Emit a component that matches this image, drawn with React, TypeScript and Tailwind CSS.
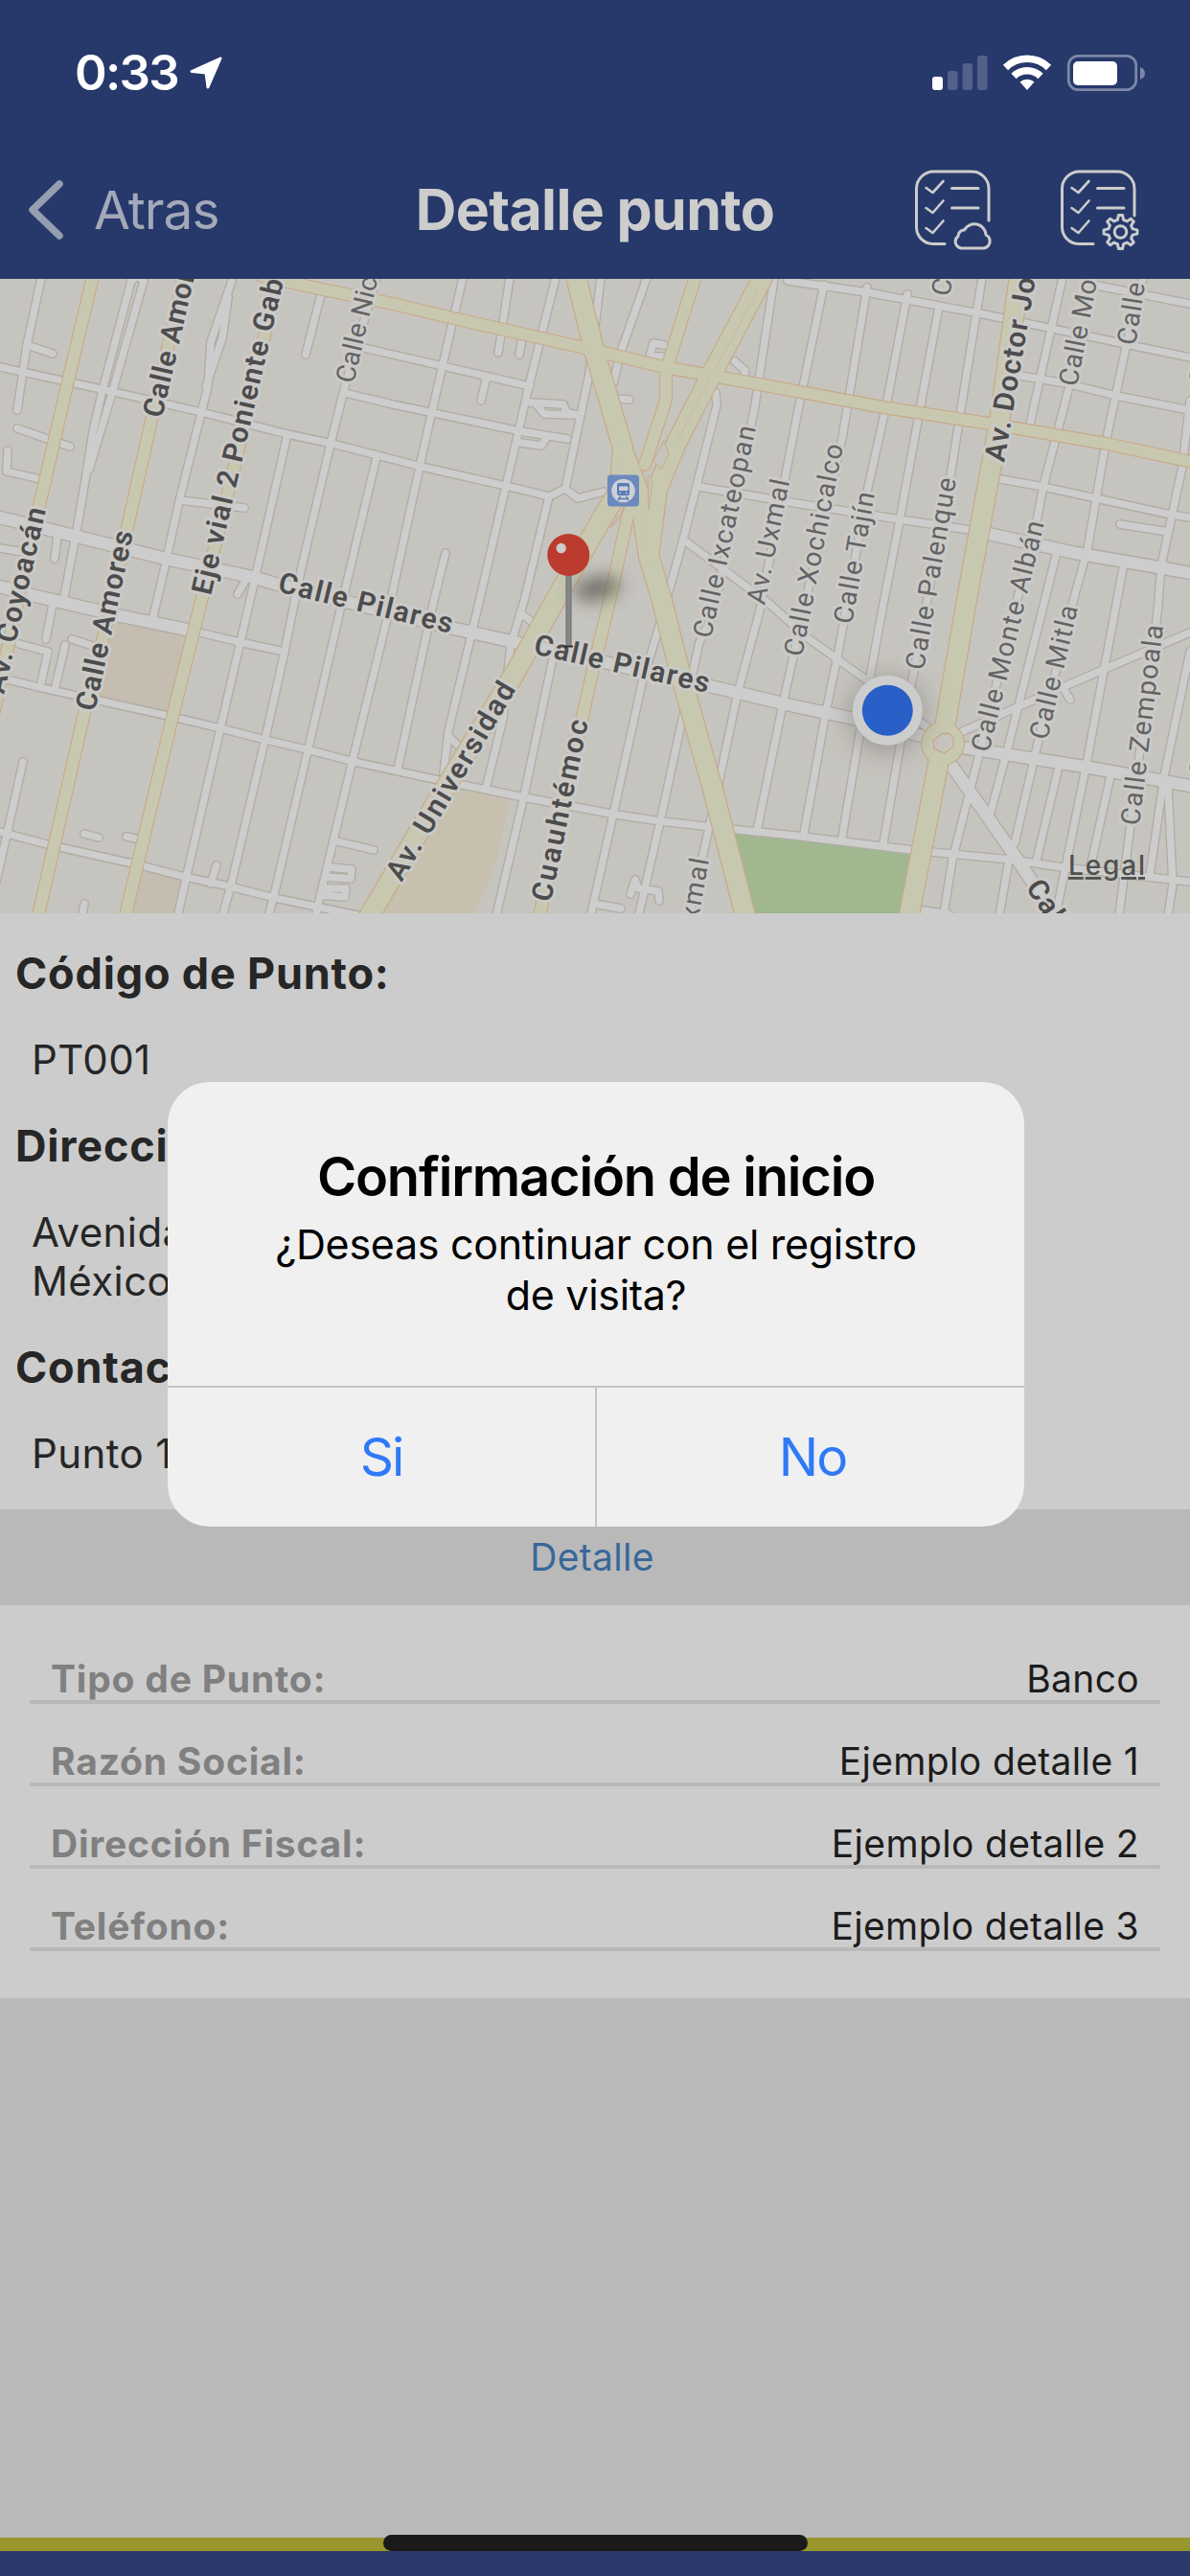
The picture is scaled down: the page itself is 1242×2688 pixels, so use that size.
import type { ReactNode } from "react";

type Point = [number, number];

type StreetLabel = {
    text: string;
    from: Point;
    to: Point;
    bold?: boolean;
};

const minorRoads = [
    "43,290 28,360 18,428",
    "28,360 55,369",
    "0,383 110,407 210,430 300,453 347,463 440,487 528,507 573,518 590,510 603,520 630,513",
    "18,447 73,466",
    "8,470 7,492 42,500",
    "137,293 107,407 97,450 88,507 80,553 67,623",
    "150,293 117,410 93,490",
    "137,293 144,288 150,293",
    "242,293 220,357 217,403 187,523 173,587 160,643",
    "238,310 232,353 215,403",
    "188,522 255,530",
    "335,307 319,370",
    "380,363 410,370 553,403",
    "360,410 410,422 543,450 592,458",
    "393,290 360,403 345,463 313,600 297,680 277,770 242,920 233,953",
    "300,453 267,600 230,760 195,913 186,953",
    "393,477 355,637 322,780 287,930 281,953",
    "60,560 57,583",
    "0,572 30,577",
    "255,608 248,620",
    "55,630 48,667",
    "20,672 50,680 42,717",
    "68,673 57,720",
    "75,667 100,675",
    "200,658 250,670 297,680",
    "0,707 40,717 180,748 230,760 277,772 320,782 370,795 453,813 547,832 643,850 690,857 743,863 830,872 952,887 1055,897 1109,905 1242,920",
    "24,795 8,867 -4,920",
    "0,868 53,882 147,903 193,915 240,925 287,937 373,955",
    "88,870 103,874",
    "132,873 146,876",
    "88,943 86,955",
    "226,903 220,922",
    "403,650 368,793 348,877 333,940 330,953",
    "348,877 390,887",
    "343,905 367,907 366,917 339,915",
    "337,927 361,927 360,936 334,934",
    "465,577 452,630 415,803",
    "483,290 450,433 438,487 412,607 403,650",
    "532,290 520,368",
    "580,290 565,350 552,403 528,507 502,620 468,763 463,807",
    "545,353 542,370",
    "507,397 502,418",
    "627,290 615,390 590,510",
    "675,290 647,370 640,400",
    "643,416 657,417",
    "553,420 588,422 591,430 603,433",
    "560,422 568,432 603,433",
    "543,462 565,465 570,457",
    "573,518 547,627 533,673 525,750 507,823",
    "808,290 788,423 745,640 730,670 710,760 690,853 667,953",
    "747,410 748,423 727,507 713,563 687,657 670,713 640,850 617,953",
    "730,508 830,525 939,542 1012,553",
    "713,563 803,630 842,665 905,710 969,760",
    "693,360 682,358 678,372 693,372",
    "767,377 778,387 775,397",
    "860,297 832,433 793,637 770,723 743,850 720,953",
    "905,300 879,457 818,730 790,867",
    "947,307 925,423 905,513 875,680 862,743 839,870",
    "980,320 959,433 939,543 922,630 897,767 879,873",
    "1025,290 1002,433 992,497 952,710 939,780 922,880",
    "822,293 905,305 1022,327 1099,343 1189,362 1242,373",
    "1109,290 1085,397 1075,443",
    "1065,392 1112,400 1165,413 1242,428",
    "1115,407 1089,507 1082,543 1022,787 994,897 985,953",
    "1193,290 1175,363 1155,457 1135,573 1122,620 1082,780 1059,880",
    "1102,580 1092,620 1052,780 1032,855",
    "1172,593 1167,620 1134,797 1109,920 1102,955",
    "1242,418 1234,487 1212,590 1208,640 1180,860 1168,955",
    "1242,680 1215,810 1200,913",
    "1219,820 1224,923 1219,955",
    "1105,800 1082,897",
    "1159,810 1138,905",
    "1052,903 1043,955",
    "1044,500 1089,508 1222,537 1242,540",
    "1169,547 1219,555",
    "1145,298 1242,317",
    "1005,763 1109,717 1242,660",
    "1109,717 1117,730",
    "963,950 990,954",
    "543,640 557,650",
    "470,770 480,780",
    "577,687 547,830 518,955",
    "620,943 648,948",
    "658,933 663,918 666,927 687,930 688,940",
];

const mediumRoads = [
    "0,540 77,559 173,583 267,603 290,610 470,655 537,670 737,715 830,737 892,750 962,768",
    "1005,780 1132,800 1242,820",
    "0,612 33,621 127,643 200,658",
    "1032,557 1122,577 1215,593 1242,598",
    "992,797 1062,897 1099,953",
];

const avenues = [
    "97,288 70,402 40,532 5,690 -10,760",
    "192,288 157,443 133,550 107,668 87,748 40,955",
    "290,288 247,477 210,627 180,748 144,900 131,955",
    "273,288 337,302 410,317 473,332 610,363 693,383 743,392 830,408 922,425 1032,442 1155,463 1244,482",
    "726,288 695,387 695,417 673,485",
    "657,530 637,623 618,703 608,747 565,947 563,955",
];

const boulevards = [
    "601,288 620,365 650,467 647,510 626,545 583,620 537,703 443,858 383,960",
    "650,470 668,517 677,580 690,623 710,703 743,820 779,960",
    "797,288 743,390 706,462 686,510 677,580",
    "1064,288 1043,440 1010,620 987,753 980,793 962,887 948,960",
];

const streetLabels: StreetLabel[] = [
    { text: "Calle Amores", from: [169, 437], to: [211, 254], bold: true },
    { text: "Calle Amores", from: [99, 743], to: [139, 556], bold: true },
    { text: "Av. Coyoacán", from: [4, 725], to: [48, 532], bold: true },
    { text: "Eje vial 2 Poniente Gab", from: [220, 622], to: [296, 293], bold: true },
    { text: "Calle Nico", from: [369, 401], to: [398, 275] },
    { text: "Calle Pilares", from: [289, 617], to: [470, 661], bold: true },
    { text: "Calle Pilares", from: [556, 682], to: [738, 723], bold: true },
    { text: "Av. Universidad", from: [419, 921], to: [539, 719], bold: true },
    { text: "Av. Cuauhtémoc", from: [563, 999], to: [614, 753], bold: true },
    { text: "Av. Uxmal", from: [716, 1030], to: [740, 897] },
    { text: "Av. Uxmal", from: [798, 632], to: [824, 502] },
    { text: "Calle Ixcateopan", from: [742, 667], to: [789, 446] },
    { text: "Calle Xochicalco", from: [837, 686], to: [880, 465] },
    { text: "Calle Tajín", from: [889, 652], to: [913, 515] },
    { text: "Calle Palenque", from: [964, 700], to: [998, 500] },
    { text: "Calle Monte Albán", from: [1032, 786], to: [1090, 546] },
    { text: "Calle Mitla", from: [1093, 773], to: [1125, 634] },
    { text: "Calle Zempoala", from: [1189, 862], to: [1214, 653] },
    { text: "Av. Doctor Jo", from: [1048, 483], to: [1081, 291], bold: true },
    { text: "Calle Mo", from: [1124, 404], to: [1145, 293] },
    { text: "Calle", from: [1185, 361], to: [1195, 296] },
    { text: "Ca", from: [991, 310], to: [997, 276] },
    { text: "Calle", from: [1260, 403], to: [1270, 338] },
    { text: "Calle", from: [1260, 812], to: [1270, 747] },
    { text: "Calle", from: [1070, 926], to: [1110, 986], bold: true },
];

const pointInfo = [
    { label: "Código de Punto:", lines: ["PT001"] },
    { label: "Dirección:", lines: ["Avenida", "México"] },
    { label: "Contacto:", lines: ["Punto 1"] },
];

const details = [
    { label: "Tipo de Punto:", value: "Banco" },
    { label: "Razón Social:", value: "Ejemplo detalle 1" },
    { label: "Dirección Fiscal:", value: "Ejemplo detalle 2" },
    { label: "Teléfono:", value: "Ejemplo detalle 3" },
];

// Casings go under every fill so that crossings stay open
function Roads({ paths, width, color }: { paths: string[]; width: number; color: string }) {
    return (
        <g fill="none" stroke={color} strokeWidth={width} strokeLinecap="round" strokeLinejoin="round">
            {paths.map((points) => (
                <polyline key={points} points={points} />
            ))}
        </g>
    );
}

function MapLabel({ text, from, to, bold }: StreetLabel) {
    const dx = to[0] - from[0];
    const dy = to[1] - from[1];
    const angle = (Math.atan2(dy, dx) * 180) / Math.PI;

    return (
        <text
            transform={`translate(${from[0]} ${from[1]}) rotate(${angle})`}
            textLength={Math.hypot(dx, dy)}
            fontSize={bold ? 30 : 28}
            fontWeight={bold ? 600 : 400}
            fill={bold ? "#4c4c4c" : "#636363"}
            stroke="#cbcac8"
            strokeWidth={6}
            strokeLinejoin="round"
            paintOrder="stroke"
        >
            {text}
        </text>
    );
}

function StreetMap() {
    return (
        <svg viewBox="0 291 1242 662" className="block w-full h-[662px] shrink-0 bg-[#c6c4be] font-[Roboto,sans-serif]">
            <defs>
                <filter id="soft" x="-100%" y="-100%" width="300%" height="300%">
                    <feGaussianBlur stdDeviation="9" />
                </filter>
                <filter id="halo" x="-100%" y="-100%" width="300%" height="300%">
                    <feGaussianBlur stdDeviation="14" />
                </filter>
            </defs>

            {/* Blocks and park */}
            <path d="M118 645 L200 660 L178 748 L98 730Z" fill="#c4bdb0" />
            <path d="M147 905 L189 916 L181 953 L134 953Z" fill="#c4bdb0" />
            <path d="M462 820 L532 833 L518 900 L495 953 L392 953Z" fill="#c7c0ae" />
            <path d="M765 866 L955 887 L940 953 L785 953Z" fill="#a1b790" />

            <Roads paths={minorRoads} width={10} color="#b1aba3" />
            <Roads paths={mediumRoads} width={15} color="#b1aba3" />
            <Roads paths={minorRoads} width={7.4} color="#cdcdcd" />
            <Roads paths={mediumRoads} width={12.4} color="#cdcdcd" />
            <Roads paths={avenues} width={14} color="#c8a987" />
            <Roads paths={boulevards} width={22.4} color="#c8a987" />
            <circle cx="984" cy="776" r="23" fill="#c8a987" />
            <Roads paths={avenues} width={11.8} color="#c8c8b1" />
            <Roads paths={boulevards} width={20} color="#c8c8b1" />
            <circle cx="984" cy="776" r="21.8" fill="#c8c8b1" />
            <path d="M974 773 L983 765.500 L990 765 L995 770 L995 779 L985 786 L975 781Z" fill="#c6c4be" stroke="#c8a987" strokeWidth="1.300" />
            <path d="M676 496 L681 501 L677 532Z M693 460 L698 474 L690 490 L682 481Z M636 551 L649 535 L652 529 L648 540Z" fill="#c6c4be" stroke="#c8a987" strokeWidth="1" />
            <path d="M706 462 L740 397 M746 387 L790 305" stroke="#c6b9a0" strokeWidth="1" />

            <ellipse cx="623" cy="614" rx="25" ry="12" transform="rotate(-12 623 614)" fill="#55554d" opacity="0.75" filter="url(#soft)" />

            {streetLabels.map((label) => (
                <MapLabel key={`${label.text}-${label.from.join("-")}`} {...label} />
            ))}

            {/* Metro station */}
            <rect x="634" y="495.500" width="33" height="33" rx="3.500" fill="#6b89be" />
            <circle cx="650.500" cy="512" r="12.300" fill="#cdd0d4" />
            <path d="M646 504h9q2 0 2 2v9q0 2-2 2h-9q-2 0-2-2v-9q0-2 2-2Z" fill="#5b7cb6" />
            <rect x="646" y="507.500" width="9.500" height="4.500" rx="1" fill="#cdd0d4" />
            <path d="M647.500 518l-2.500 4M653.500 518l2.500 4M646 520.500h9" stroke="#5b7cb6" strokeWidth="1.500" fill="none" />
            <path d="M646.500 514.500h1.500M653 514.500h1.500" stroke="#cdd0d4" strokeWidth="1.500" />

            {/* Pin */}
            <rect x="591" y="598" width="5" height="77" fill="#868787" />
            <path d="M591 598v75M596 598v75" stroke="#6c6d6d" strokeWidth="1" />
            <path d="M589 674.500h9" stroke="#2f2f2f" strokeWidth="2" />
            <circle cx="593.300" cy="579" r="22" fill="#bb3b2f" />
            <circle cx="585.700" cy="572" r="5.200" fill="#cccccc" />

            {/* Current position */}
            <circle cx="926" cy="746" r="38" fill="#77756f" opacity="0.6" filter="url(#halo)" />
            <circle cx="926.300" cy="741.300" r="36.500" fill="#cdcdcd" />
            <circle cx="926.300" cy="741.300" r="26.500" fill="#2860c8" />

            <text
                x="1115"
                y="913"
                textLength="80"
                className="font-[Inter,sans-serif] underline"
                fontSize="28"
                fontWeight="500"
                fill="#505050"
            >
                Legal
            </text>
        </svg>
    );
}

function StatusBar() {
    return (
        <div className="flex h-[152px] items-center justify-between pl-[78px] pr-[46px]">
            <div className="flex items-center gap-[12px]">
                <span className="text-[51px] leading-[60px] font-semibold tracking-[-1.7px] text-white">0:33</span>
                <svg viewBox="0 0 34 34" className="h-[34px] w-[34px]">
                    <path d="M32 2 L2 15.500 L17 17 L19 32Z" fill="white" stroke="white" strokeWidth="3" strokeLinejoin="round" />
                </svg>
            </div>
            <svg viewBox="972 56 224 40" className="h-[40px] w-[224px]">
                <rect x="973" y="80" width="11" height="14" rx="3" fill="white" />
                <g fill="#536089">
                    <rect x="989" y="74" width="10.500" height="20" rx="3" />
                    <rect x="1004.500" y="66" width="10.500" height="28" rx="3" />
                    <rect x="1020" y="58" width="10.500" height="36" rx="3" />
                </g>
                <g fill="none" stroke="white" strokeWidth="7.500">
                    <path d="M1049.500 70.500a32 32 0 0 1 45 0" />
                    <path d="M1058 79.500a20 20 0 0 1 28 0" />
                </g>
                <path d="M1072 94l-7.500-8.500a11.500 11.500 0 0 1 15 0Z" fill="white" />
                <rect x="1115.300" y="58.300" width="70.400" height="35.400" rx="10" fill="none" stroke="#7c87a6" strokeWidth="2.800" />
                <rect x="1120" y="64" width="46" height="25" rx="5" fill="white" />
                <path d="M1190 70q5 2 5 6.500t-5 6.500Z" fill="#7c87a6" />
            </svg>
        </div>
    );
}

function ChecklistIcon({ outline, children }: { outline: string; children: ReactNode }) {
    return (
        <svg
            viewBox="954 175 86 88"
            className="h-[88px] w-[86px]"
            fill="none"
            stroke="#cccccc"
            strokeWidth="3"
            strokeLinecap="round"
            strokeLinejoin="round"
        >
            <path d={outline} />
            <path d="M966.500 196l7 5 11-12M966.500 217l7 5 11-12.500M966.500 238l7 5 11-12.500" strokeWidth="2.600" />
            <path d="M993.500 196.500h27.500M993.500 217h27.500" />
            {children}
        </svg>
    );
}

// Eight blunt teeth round the centre
const gearPoints = Array.from({ length: 32 }, (_, i) => {
    const tooth = Math.floor(i / 4);
    const offset = [-14, -7, 7, 14][i % 4];
    const radius = [13, 17.5, 17.5, 13][i % 4];
    const a = ((tooth * 45 + offset - 90) * Math.PI) / 180;
    return `${(1017.5 + radius * Math.cos(a)).toFixed(1)},${(242 + radius * Math.sin(a)).toFixed(1)}`;
}).join(" ");

function NavBar() {
    return (
        <div className="flex h-[139px] items-start">
            <div className="flex w-[400px] items-center pl-[29px] pt-[35px]">
                <svg viewBox="0 0 38 64" className="h-[64px] w-[38px]">
                    <path d="M33 5 L5 32 L33 59" fill="none" stroke="#959db0" strokeWidth="7.500" strokeLinecap="round" strokeLinejoin="round" />
                </svg>
                <span className="pl-[31px] text-[55px] leading-[64px] tracking-[-1px] text-[#a3a9b9]">Atras</span>
            </div>
            <h1 className="w-[442px] whitespace-nowrap pt-[35px] text-center text-[59px] leading-[64px] font-bold tracking-[-0.65px] text-[#cdcdcd]">
                Detalle punto
            </h1>
            <div className="flex gap-[66px] pl-[112px] pt-[23px]">
                <ChecklistIcon outline="M986 254.500h-12a17.500 17.500 0 0 1-17.500-17.500v-40a18 18 0 0 1 18-18h39.500a18 18 0 0 1 18 18v33">
                    <path d="M1003 259h24a7.500 7.500 0 0 0 2-14a12 12 0 0 0-22.500-5a6.500 6.500 0 0 0-6.500 6.500a7 7 0 0 0 3 12.500Z" />
                </ChecklistIcon>
                <ChecklistIcon outline="M989 254.500h-15a17.500 17.500 0 0 1-17.500-17.500v-40a18 18 0 0 1 18-18h39.500a18 18 0 0 1 18 18v28">
                    <polygon points={gearPoints} />
                    <circle cx="1017.500" cy="242" r="6.300" />
                </ChecklistIcon>
            </div>
        </div>
    );
}

function ConfirmDialog() {
    return (
        <div className="absolute left-[175px] top-[1129px] flex h-[464px] w-[894px] flex-col overflow-hidden rounded-[44px] bg-[#f0f0f0]">
            <div className="h-[317px] pt-[66px] text-center text-black">
                <h2 className="text-[56px] leading-[66px] font-semibold tracking-[-1.2px]">Confirmación de inicio</h2>
                <p className="mt-[11px] text-[43px] leading-[53px] tracking-[-0.3px]">
                    ¿Deseas continuar con el registro
                    <br />
                    de visita?
                </p>
            </div>
            <div className="flex flex-1 border-t-2 border-[#c3c3c3] text-[55px] tracking-[-2px] text-[#2f79f8]">
                <button className="w-[448px] border-r-2 border-[#c3c3c3]">Si</button>
                <button className="flex-1 pl-1">No</button>
            </div>
        </div>
    );
}

export default function App() {
    return (
        <div className="relative flex h-[2688px] w-[1242px] flex-col overflow-hidden bg-[#b9b9b9] font-[Inter,sans-serif]">
            <header className="h-[291px] shrink-0 bg-[#27396b]">
                <StatusBar />
                <NavBar />
            </header>

            <StreetMap />

            {/* Point info */}
            <section className="flex h-[622px] shrink-0 flex-col gap-[37px] bg-[#cccccc] pt-[36px] text-[#262626]">
                {pointInfo.map(({ label, lines }) => (
                    <div key={label} className="flex flex-col gap-[37px]">
                        <h3 className="pl-[16px] text-[45px] leading-[54px] font-bold tracking-[0.8px]">{label}</h3>
                        <p className="pl-[33px] text-[42px] leading-[51.5px] tracking-[0.4px]">
                            {lines.map((line) => (
                                <span key={line} className="block">
                                    {line}
                                </span>
                            ))}
                        </p>
                    </div>
                ))}
            </section>

            <div className="flex h-[100px] shrink-0 items-center justify-center pr-[6px] pt-px text-[39px] tracking-[0.3px] text-[#386899]">
                Detalle
            </div>

            {/* Detail rows */}
            <section className="h-[410px] shrink-0 bg-[#cccccc] px-[31px] pt-[17px]">
                {details.map(({ label, value }) => (
                    <div
                        key={label}
                        className="flex h-[86px] items-end justify-between border-b-4 border-[#b9b9b9] px-[22px] text-[39px] leading-[44px]"
                    >
                        <span className="font-bold tracking-[0.8px] text-[#808080]">{label}</span>
                        <span className="tracking-[0.35px] text-[#1c1c1c]">{value}</span>
                    </div>
                ))}
            </section>

            {/* Bottom strip */}
            <footer className="mt-auto h-[40px] border-t-[14px] border-[#98962c] bg-[#2c386a]" />
            <div className="absolute left-[400px] top-[2645px] h-[17px] w-[443px] rounded-full bg-[#1a1a1a]" />

            <ConfirmDialog />
        </div>
    );
}
